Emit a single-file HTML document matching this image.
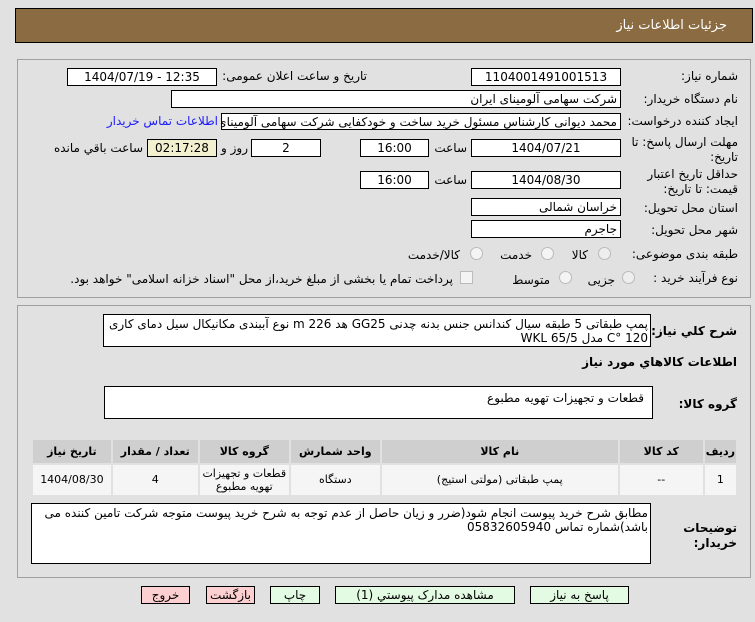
<!DOCTYPE html>
<html><head><meta charset="utf-8"><style>
body{margin:0;width:755px;height:622px;background:#e1e1e1;font-family:Tahoma,"DejaVu Sans","Liberation Sans",sans-serif;font-size:12px;color:#000;position:relative;overflow:hidden}
.a{position:absolute}
.box{position:absolute;background:#fff;border:1px solid #000;box-sizing:border-box;direction:rtl;white-space:nowrap;overflow:hidden}
.c{text-align:center;line-height:16px}
.r{padding-right:3px;line-height:16px}
.l{position:absolute;direction:rtl;white-space:nowrap;text-align:right}
.btn{position:absolute;border:1px solid #000;box-sizing:border-box;text-align:center;line-height:16px;font-size:12px;top:586px;height:18px}
td{border:2px solid #e1e1e1;text-align:center;font-size:11px}
</style></head><body>
<div class="a" style="left:15px;top:8px;width:738px;height:35px;background:#8b6b41;border:1px solid #000;box-sizing:border-box"></div>
<div class="l" style="right:28px;top:18px;color:#fff;font-size:13px">جزئیات اطلاعات نیاز</div>

<div class="a" style="left:17px;top:59px;width:734px;height:239px;border:1px solid #a0a0a0;box-sizing:border-box"></div>
<div class="a" style="left:17px;top:305px;width:734px;height:273px;border:1px solid #a0a0a0;box-sizing:border-box"></div>

<div class="l" style="right:17px;top:69px">شماره نیاز:</div>
<div class="box c" style="left:471px;top:68px;width:150px;height:18px">1104001491001513</div>
<div class="l" style="right:388px;top:69px">تاریخ و ساعت اعلان عمومی:</div>
<div class="box c" style="left:67px;top:68px;width:150px;height:18px;direction:ltr">1404/07/19 - 12:35</div>

<div class="l" style="right:17px;top:92px">نام دستگاه خریدار:</div>
<div class="box r" style="left:171px;top:90px;width:450px;height:18px">شرکت سهامی آلومینای ایران</div>

<div class="l" style="right:17px;top:114px">ایجاد کننده درخواست:</div>
<div class="box r" style="left:221px;top:113px;width:400px;height:17px">محمد دیوانی کارشناس مسئول خرید ساخت و خودکفایی شرکت سهامی آلومینای ایران</div>
<div class="l" style="right:537px;top:114px;color:#1a1aff">اطلاعات تماس خریدار</div>

<div class="l" style="right:17px;top:135px;line-height:15px">مهلت ارسال پاسخ: تا<br>تاریخ:</div>
<div class="box c" style="left:471px;top:139px;width:150px;height:18px">1404/07/21</div>
<div class="l" style="right:288px;top:141px">ساعت</div>
<div class="box c" style="left:360px;top:139px;width:69px;height:18px">16:00</div>
<div class="box c" style="left:251px;top:139px;width:70px;height:18px">2</div>
<div class="l" style="right:507px;top:141px">روز و</div>
<div class="box c" style="left:147px;top:139px;width:70px;height:18px;background:#f2f0cf">02:17:28</div>
<div class="l" style="right:612px;top:141px">ساعت باقي مانده</div>

<div class="l" style="right:17px;top:167px;line-height:15px">حداقل تاریخ اعتبار<br>قیمت: تا تاریخ:</div>
<div class="box c" style="left:471px;top:171px;width:150px;height:18px">1404/08/30</div>
<div class="l" style="right:288px;top:173px">ساعت</div>
<div class="box c" style="left:360px;top:171px;width:69px;height:18px">16:00</div>

<div class="l" style="right:17px;top:201px">استان محل تحویل:</div>
<div class="box r" style="left:471px;top:198px;width:150px;height:18px">خراسان شمالی</div>
<div class="l" style="right:17px;top:223px">شهر محل تحویل:</div>
<div class="box r" style="left:471px;top:220px;width:150px;height:18px">جاجرم</div>

<div class="l" style="right:17px;top:247px">طبقه بندی موضوعی:</div>
<div class="a" style="left:598px;top:247px;width:11px;height:11px;border:1px solid #bbb;border-radius:50%;background:#eee"></div>
<div class="l" style="right:167px;top:248px">کالا</div>
<div class="a" style="left:541px;top:247px;width:11px;height:11px;border:1px solid #bbb;border-radius:50%;background:#f4f4f4"></div>
<div class="l" style="right:223px;top:248px">خدمت</div>
<div class="a" style="left:470px;top:247px;width:11px;height:11px;border:1px solid #bbb;border-radius:50%;background:#f4f4f4"></div>
<div class="l" style="right:295px;top:248px">کالا/خدمت</div>

<div class="l" style="right:17px;top:271px">نوع فرآیند خرید :</div>
<div class="a" style="left:622px;top:271px;width:11px;height:11px;border:1px solid #bbb;border-radius:50%;background:#eee"></div>
<div class="l" style="right:140px;top:273px">جزیی</div>
<div class="a" style="left:559px;top:271px;width:11px;height:11px;border:1px solid #bbb;border-radius:50%;background:#f4f4f4"></div>
<div class="l" style="right:205px;top:273px">متوسط</div>
<div class="a" style="left:460px;top:271px;width:11px;height:11px;border:1px solid #bbb;background:#f4f4f4"></div>
<div class="l" style="right:302px;top:272px">پرداخت تمام یا بخشی از مبلغ خرید،از محل "اسناد خزانه اسلامی" خواهد بود.</div>

<div class="l" style="right:18px;top:324px;font-weight:bold">شرح کلي نیاز:</div>
<div class="box" style="left:103px;top:314px;width:548px;height:33px;padding:2px 2px 0 0;line-height:14px;white-space:normal;font-size:12px">پمپ طبقاتی 5 طبقه سیال کندانس جنس بدنه چدنی GG25 هد 226 m نوع آببندی مکانیکال سیل دمای کاری 120 °C مدل WKL 65/5</div>

<div class="l" style="right:18px;top:355px;font-weight:bold">اطلاعات کالاهاي مورد نياز</div>
<div class="l" style="right:18px;top:397px;font-weight:bold">گروه کالا:</div>
<div class="box" style="left:104px;top:386px;width:549px;height:33px;padding:4px 8px 0 0">قطعات و تجهیزات تهویه مطبوع</div>

<table class="a" style="left:31px;top:438px;width:707px;height:59px;border-collapse:collapse;border:1px solid #c8c8c8;direction:rtl;background:#e1e1e1">
<tr style="background:#cfcfcf;height:23px;font-weight:bold"><td style="width:27px">ردیف</td><td style="width:81px">کد کالا</td><td style="width:234px">نام کالا</td><td style="width:87px">واحد شمارش</td><td style="width:87px">گروه کالا</td><td style="width:83px">تعداد / مقدار</td><td>تاریخ نیاز</td></tr>
<tr style="background:#f5f5f5;height:30px"><td>1</td><td>--</td><td>پمپ طبقاتی (مولتی استیج)</td><td>دستگاه</td><td style="line-height:13px">قطعات و تجهیزات تهویه مطبوع</td><td>4</td><td>1404/08/30</td></tr>
</table>

<div class="l" style="right:18px;top:521px;font-weight:bold;line-height:15px">توضیحات<br>خریدار:</div>
<div class="box" style="left:31px;top:503px;width:620px;height:61px;padding:2px 2px 0 0;line-height:14px;white-space:normal">مطابق شرح خرید پیوست انجام شود(ضرر و زیان حاصل از عدم توجه به شرح خرید پیوست متوجه شرکت تامین کننده می باشد)شماره تماس 05832605940</div>

<div class="btn" style="left:141px;width:49px;background:#fcd0d0">خروج</div>
<div class="btn" style="left:206px;width:49px;background:#fcd0d0">بازگشت</div>
<div class="btn" style="left:270px;width:50px;background:#e3fbe3">چاپ</div>
<div class="btn" style="left:335px;width:180px;background:#e3fbe3">مشاهده مدارک پیوستي (1)</div>
<div class="btn" style="left:530px;width:99px;background:#e3fbe3">پاسخ به نیاز</div>
</body></html>
